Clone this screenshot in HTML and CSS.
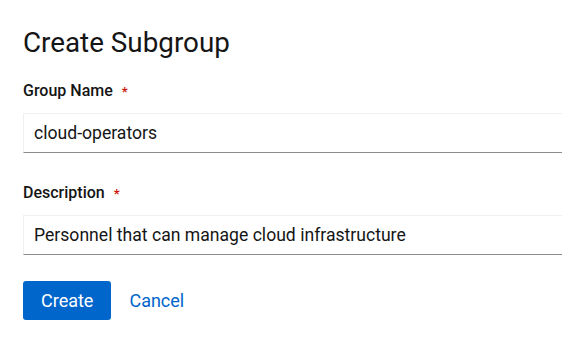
FILE: index.html
```html
<!DOCTYPE html>
<html lang="en">
<head>
<meta charset="utf-8">
<title>Create Subgroup</title>
<link rel="stylesheet" href="styles.css">
</head>
<body>
<div class="page">
  <h1 class="title">Create Subgroup</h1>
  <form class="form">
    <div class="field">
      <label class="label" for="name">Group Name<span class="req">*</span></label>
      <input class="input" id="name" type="text" value="cloud-operators">
    </div>
    <div class="field field-last">
      <label class="label" for="desc">Description<span class="req">*</span></label>
      <input class="input" id="desc" type="text" value="Personnel that can manage cloud infrastructure">
    </div>
    <div class="actions">
      <button type="button" class="btn btn-primary">Create</button>
      <button type="button" class="btn btn-link">Cancel</button>
    </div>
  </form>
</div>
</body>
</html>
```

FILE: styles.css
```css
html, body {
  margin: 0;
  padding: 0;
  background: #ffffff;
  overflow: hidden;
}

.page {
  width: 562px;
  height: 343px;
  overflow: hidden;
  box-sizing: border-box;
  padding: 26px 0 0 23px;
  font-family: Roboto, "Liberation Sans", sans-serif;
  color: #151515;
}

.title {
  margin: 0;
  font-size: 27.8px;
  line-height: 33px;
  font-weight: 400;
  color: #151515;
}

.form {
  display: flex;
  flex-direction: column;
  margin-top: 21px;
}

.field {
  display: flex;
  flex-direction: column;
  gap: 10px;
  margin-bottom: 29px;
}

.field-last {
  margin-bottom: 26px;
}

.label {
  font-size: 16px;
  line-height: 22px;
  font-weight: 500;
  color: #151515;
}

.req {
  color: #c9190b;
  margin-left: 9px;
  font-size: 13px;
  font-weight: 700;
}

.input {
  box-sizing: border-box;
  width: 580px;
  height: 40px;
  margin: 0;
  padding: 0 10px;
  font-family: inherit;
  font-size: 17.6px;
  color: #151515;
  background: #ffffff;
  border: 1px solid #f0f0f0;
  border-bottom-color: #8a8d90;
  border-radius: 0;
  outline: none;
}

.actions {
  display: flex;
  align-items: center;
}

.btn {
  font-family: inherit;
  font-size: 18px;
  line-height: 27px;
  border: 0;
  border-radius: 3px;
  cursor: pointer;
  margin: 0;
}

.btn-primary {
  height: 39px;
  padding: 0 18px;
  background: #0066cc;
  color: #ffffff;
}

.btn-link {
  height: 39px;
  padding: 0 18px;
  background: transparent;
  color: #0066cc;
}
```
